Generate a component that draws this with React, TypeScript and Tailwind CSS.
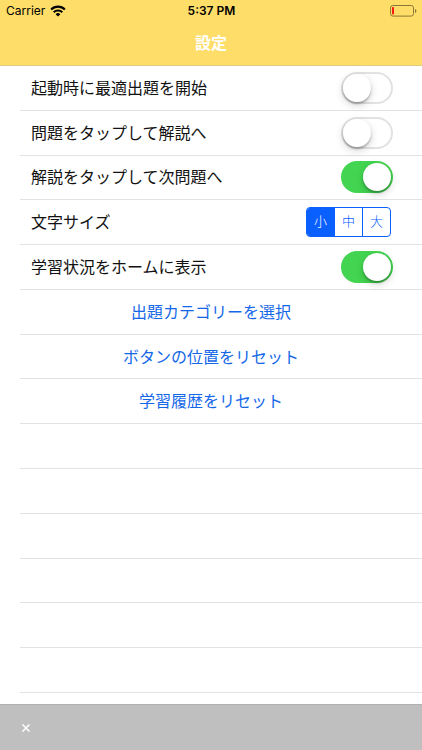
import React, { useState } from "react";

const ACTIONS = [
  "出題カテゴリーを選択",
  "ボタンの位置をリセット",
  "学習履歴をリセット",
];

const FONT_SIZES = ["小", "中", "大"];

// Blank rows keep the separators going below the last action
const EMPTY_ROWS = 6;

const WifiIcon = () => (
  <svg viewBox="0 0 16 12" className="h-3 w-4" aria-hidden="true">
    <g fill="none" stroke="#000" strokeWidth="2.1">
      <path d="M1.1 4.5a9.8 9.8 0 0 1 13.8 0" />
      <path d="M3.7 7.2a6.1 6.1 0 0 1 8.600 0" />
    </g>
    <path d="M8 11.600 5.600 9.2a3.4 3.4 0 0 1 4.800 0z" fill="#000" />
  </svg>
);

const BatteryIcon = () => (
  <svg viewBox="0 0 27 12" className="h-3 w-[27px]" aria-hidden="true">
    <rect
      x="0.5"
      y="0.5"
      width="23"
      height="10.6"
      rx="2.4"
      fill="none"
      stroke="#8a7838"
    />
    <rect x="2" y="2" width="2" height="7.6" rx="0.8" fill="#fb1a12" />
    <path d="M25 4v4c.9-.3 1.400-1.1 1.400-2S25.900 4.3 25 4z" fill="#8a7838" />
  </svg>
);

const Row = ({ children }: { children?: React.ReactNode }) => (
  <li className="ml-5 flex items-center justify-between border-b border-[#e2e2e4] pl-[11px] pr-[29px]">
    {children}
  </li>
);

type SwitchRowProps = {
  id: string;
  label: string;
  defaultChecked?: boolean;
};

const SwitchRow = ({ id, label, defaultChecked }: SwitchRowProps) => (
  <Row>
    <label htmlFor={id}>{label}</label>
    <input
      id={id}
      type="checkbox"
      role="switch"
      defaultChecked={defaultChecked}
      className="relative h-8 w-[52px] shrink-0 cursor-pointer appearance-none rounded-full border-2 border-[#e2e2e2] bg-white transition-colors before:absolute before:left-0 before:top-0 before:size-7 before:rounded-full before:bg-white before:shadow-[0_2px_2px_rgba(0,0,0,0.24),0_3px_8px_rgba(0,0,0,0.18)] before:transition-transform checked:border-[#43d551] checked:bg-[#43d551] checked:before:translate-x-5"
    />
  </Row>
);

const App = () => {
  const [fontSize, setFontSize] = useState("小");

  return (
    <div className="flex min-h-screen flex-col bg-white font-['Inter','Noto_Sans_CJK_JP',sans-serif] text-base text-[#111]">
      {/* ─── HEADER ─── */}
      <header className="border-b border-[#dfcb82] bg-[#fede68] pb-px">
        <div className="grid h-[22px] grid-cols-3 items-center pl-[6px] pr-[5px] text-xs text-black">
          <div className="flex items-center gap-[5px]">
            <span>Carrier</span>
            <WifiIcon />
          </div>
          <span className="text-center font-semibold">5:37 PM</span>
          <div className="flex justify-end">
            <BatteryIcon />
          </div>
        </div>
        <h1 className="flex h-[42px] items-center justify-center font-bold text-white">
          設定
        </h1>
      </header>

      {/* ─── SETTINGS LIST ─── */}
      <main className="flex flex-1 flex-col pb-[11px]">
        <ul className="grid flex-1 auto-rows-fr">
          <SwitchRow id="auto-start" label="起動時に最適出題を開始" />
          <SwitchRow id="tap-question" label="問題をタップして解説へ" />
          <SwitchRow
            id="tap-answer"
            label="解説をタップして次問題へ"
            defaultChecked
          />
          <Row>
            <span id="font-size-label">文字サイズ</span>
            <div
              role="radiogroup"
              aria-labelledby="font-size-label"
              className="mr-[2px] flex h-[30px] w-[85px] divide-x divide-[#0a60ff] overflow-hidden rounded border border-[#0a60ff] text-[13px] font-light text-[#0a60ff]"
            >
              {FONT_SIZES.map((size) => (
                <label
                  key={size}
                  className="flex flex-1 cursor-pointer items-center justify-center has-checked:bg-[#0a60ff] has-checked:text-white"
                >
                  <input
                    type="radio"
                    name="font-size"
                    value={size}
                    checked={fontSize === size}
                    onChange={() => setFontSize(size)}
                    className="sr-only"
                  />
                  {size}
                </label>
              ))}
            </div>
          </Row>
          <SwitchRow id="show-status" label="学習状況をホームに表示" defaultChecked />

          {ACTIONS.map((action) => (
            <li key={action} className="ml-5 flex border-b border-[#e2e2e4]">
              <button
                type="button"
                className="flex-1 cursor-pointer pr-5 text-[#1468e8]"
              >
                {action}
              </button>
            </li>
          ))}

          {Array.from({ length: EMPTY_ROWS }).map((_, index) => (
            <Row key={index} />
          ))}
        </ul>
      </main>

      {/* ─── BOTTOM BAR ─── */}
      <footer className="flex h-[46px] items-center border-t border-[#b0b0b0] bg-[#bfbfbf] px-5">
        <button
          type="button"
          aria-label="閉じる"
          className="flex size-3 cursor-pointer items-center justify-center text-white"
        >
          <svg viewBox="0 0 8 8" className="size-2" aria-hidden="true">
            <path
              d="M0.5 0.5 7.5 7.5M7.5 0.5 0.5 7.5"
              stroke="currentColor"
              strokeWidth="1.5"
            />
          </svg>
        </button>
      </footer>
    </div>
  );
};

export default App;
